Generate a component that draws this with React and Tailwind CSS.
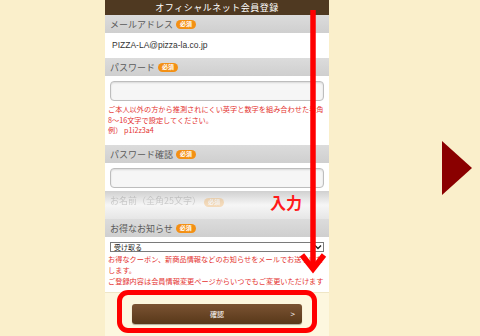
const jp = { fontFamily: '"Noto Sans CJK JP", "Noto Sans", sans-serif' };

function Badge() {
  return (
    <span className="ml-[3px] inline-flex items-center justify-center h-[9px] w-[20px] rounded-full bg-[#f39014] text-white text-[6px] font-bold leading-none">
      必須
    </span>
  );
}

function Bar({ label, className = '' }) {
  return (
    <div className={`h-[18px] flex items-center px-[5px] bg-gradient-to-b from-[#dcdcdc] to-[#cfcfcf] text-[#5a5a5a] text-[9px] leading-none ${className}`}>
      <span>{label}</span>
      <Badge />
    </div>
  );
}

function Field() {
  return (
    <div className="mx-[5px] h-[20px] rounded-[4px] border border-[#bdbdbd] bg-[#f6f6f6] shadow-[inset_0_1px_2px_rgba(0,0,0,0.12)]" />
  );
}

export default function App() {
  return (
    <div className="relative w-[480px] h-[336px] overflow-hidden bg-[#faefcb] flex" style={jp}>
      <div className="w-[105px] shrink-0" />

      {/* phone screen */}
      <div className="w-[224px] shrink-0 bg-white flex flex-col">
        <div className="h-[15px] bg-[#4f3921] text-white text-[9px] leading-none flex items-center justify-center tracking-[0.5px]">
          オフィシャルネット会員登録
        </div>

        <Bar label="メールアドレス" />
        <div className="h-[25px] flex items-center px-[7px] text-[8.5px] text-[#333]" style={{ fontFamily: '"Liberation Sans", sans-serif' }}>
          PIZZA-LA@pizza-la.co.jp
        </div>

        <Bar label="パスワード" />
        <div className="h-[69px] pt-[5px]">
          <Field />
          <div className="px-[3px] pt-[3px] text-[7.2px] leading-[10.5px] text-[#e4322f] whitespace-nowrap overflow-hidden">
            <p>ご本人以外の方から推測されにくい英字と数字を組み合わせた半角</p>
            <p>8～16文字で設定してください。</p>
            <p>例） p1i2z3a4</p>
          </div>
        </div>

        <Bar label="パスワード確認" className="h-[17px]" />
        <div className="h-[28px] pt-[5px]">
          <Field />
        </div>

        {/* faded name row */}
        <div className="h-[28px] bg-gradient-to-b from-[#d0d0d0] via-[#f6f6f6] to-[#e6e6e6] px-[5px] pt-[5px]">
          <div className="text-[9px] leading-none text-[#5a5a5a] opacity-25 blur-[0.6px]">
            <span>お名前（全角25文字）</span>
            <Badge />
          </div>
        </div>

        <Bar label="お得なお知らせ" className="h-[17px]" />
        <div className="h-[55px] pt-[5px] px-[5px]">
          <div className="h-[10px] border border-[#7a7a7a] bg-white flex items-center justify-between pl-[3px] pr-[1px] text-[7px] leading-none text-[#222]">
            <span>受け取る</span>
            <svg width="8" height="6" viewBox="0 0 8 6">
              <path d="M1 1.5 L4 4.5 L7 1.5" fill="none" stroke="#222" strokeWidth="1.4" />
            </svg>
          </div>
          <div className="pt-[2px] text-[7.2px] leading-[11px] text-[#e4322f] -mx-[2px] whitespace-nowrap overflow-hidden">
            <p>お得なクーポン、新商品情報などのお知らせをメールでお送りいた</p>
            <p>します。</p>
            <p>ご登録内容は会員情報変更ページからいつでもご変更いただけます</p>
          </div>
        </div>

        <div className="flex-1 bg-[#fdf7df] border-t border-[#efe6c6] flex justify-center pt-[11px]">
          <div className="relative w-[170px] h-[20px] rounded-[3px] bg-gradient-to-b from-[#7b5333] to-[#583819] text-white text-[7px] leading-none flex items-center justify-center shadow-[0_1px_1px_rgba(0,0,0,0.3)]">
            確認
            <span className="absolute right-[7px] top-[6px] text-[8px]">&gt;</span>
          </div>
        </div>
      </div>

      {/* next arrow */}
      <div className="flex-1 flex items-center justify-end pr-[8px]">
        <svg width="30" height="54" viewBox="0 0 30 54">
          <polygon points="0,0 30,27 0,54" fill="#8a0000" />
        </svg>
      </div>

      {/* annotations */}
      <svg className="absolute left-[300px] top-[10px]" width="30" height="266" viewBox="0 0 30 266">
        <line x1="13" y1="0" x2="13" y2="258" stroke="#ff0000" strokeWidth="5.5" />
        <polyline points="2,245 13,259 24,245" fill="none" stroke="#ff0000" strokeWidth="5.5" strokeLinejoin="miter" />
      </svg>
      <div className="absolute left-[270px] top-[194px] text-[16px] font-bold leading-none text-[#ff1a1a]">入力</div>
      <div className="absolute left-[117px] top-[290px] w-[200px] h-[43px] rounded-[11px] border-[5px] border-[#ff0000]" />
    </div>
  );
}
